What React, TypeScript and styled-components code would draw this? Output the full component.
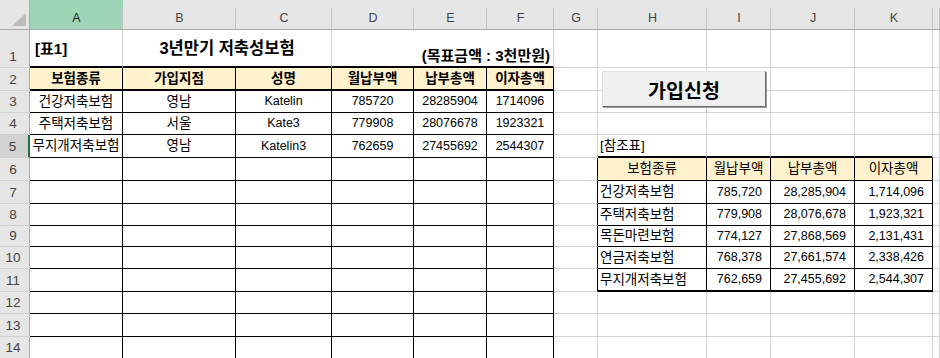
import React from 'react'
import styled, { createGlobalStyle, css } from 'styled-components'

type Line = 'grid' | 'thin' | 'thick'

type CellSpec = {
  text?: string
  span?: number
  align?: 'left' | 'center' | 'right'
  valign?: 'center' | 'end'
  bold?: boolean
  fill?: boolean
  size?: number
  padLeft?: number
  padRight?: number
  r: Line
  b: Line
}

const COLS = ['A', 'B', 'C', 'D', 'E', 'F', 'G', 'H', 'I', 'J', 'K', '']
const COL_WIDTHS = [93, 113, 96, 82, 73, 67, 44, 109, 64, 84, 78]
const ROW_HEIGHTS = [38, 23, 22, 22, 23, 23, 23, 22, 21, 22, 23, 22, 23, 22]
const ACTIVE_COL = 'A'
const ACTIVE_ROW = 5

const LEFT_HEAD = ['보험종류', '가입지점', '성명', '월납부액', '납부총액', '이자총액']
const LEFT_DATA = [
  ['건강저축보험', '영남', 'Katelin', '785720', '28285904', '1714096'],
  ['주택저축보험', '서울', 'Kate3', '779908', '28076678', '1923321'],
  ['무지개저축보험', '영남', 'Katelin3', '762659', '27455692', '2544307'],
]

const REF_HEAD = ['보험종류', '월납부액', '납부총액', '이자총액']
const REF_DATA = [
  ['건강저축보험', '785,720', '28,285,904', '1,714,096'],
  ['주택저축보험', '779,908', '28,076,678', '1,923,321'],
  ['목돈마련보험', '774,127', '27,868,569', '2,131,431'],
  ['연금저축보험', '768,378', '27,661,574', '2,338,426'],
  ['무지개저축보험', '762,659', '27,455,692', '2,544,307'],
]

// hangul runs a bit wider in the original font than latin does
const textSize = (text?: string) => (text && /[가-힣]/.test(text) ? 13.5 : 12.5)

// builds the cells of one sheet row (row numbers start at 1 like Excel)
const buildRow = (row: number): CellSpec[] => {
  const cells: CellSpec[] = []

  if (row === 1) {
    cells.push({ text: '[표1]', align: 'left', bold: true, size: 15, padLeft: 5, r: 'grid', b: 'thick' })
    cells.push({ text: '3년만기 저축성보험', span: 2, bold: true, size: 16.5, r: 'grid', b: 'thick' })
    cells.push({
      text: '(목표금액 : 3천만원)',
      span: 3,
      align: 'right',
      valign: 'end',
      bold: true,
      size: 15,
      r: 'grid',
      b: 'thick',
    })
  } else if (row === 2) {
    LEFT_HEAD.forEach((text) => cells.push({ text, bold: true, fill: true, r: 'thin', b: 'thick' }))
  } else {
    const data = LEFT_DATA[row - 3]
    for (let c = 0; c < 6; c++) {
      cells.push({ text: data ? data[c] : undefined, r: 'thin', b: 'thin' })
    }
  }

  // column G: its right edge is the left edge of the reference table
  cells.push({ r: row >= 6 && row <= 11 ? 'thin' : 'grid', b: 'grid' })

  // columns H..K
  for (let c = 0; c < 4; c++) {
    if (row === 5) {
      cells.push({ text: c === 0 ? '[참조표]' : undefined, align: 'left', padLeft: 2, r: 'grid', b: 'thick' })
    } else if (row === 6) {
      cells.push({ text: REF_HEAD[c], fill: true, r: 'thin', b: 'thin' })
    } else if (row >= 7 && row <= 11) {
      const data = REF_DATA[row - 7]
      cells.push({
        text: data[c],
        align: c === 0 ? 'left' : 'right',
        padLeft: 2,
        padRight: c === 0 ? 3 : 8,
        r: 'thin',
        b: row === 11 ? 'thick' : 'thin',
      })
    } else {
      cells.push({ r: 'grid', b: 'grid' })
    }
  }

  cells.push({ r: 'grid', b: 'grid' })
  return cells
}

const line = (l: Line) =>
  l === 'thick' ? '2px solid #000' : l === 'thin' ? '1px solid #000' : '1px solid #d4d4d4'

export default function App() {
  const rows = ROW_HEIGHTS.map((_, i) => i + 1)

  return (
    <>
      <GlobalStyle />
      <Sheet>
        <Corner>
          <CornerMark />
        </Corner>
        {COLS.map((col, i) => (
          <ColHead key={`h${i}`} $active={col === ACTIVE_COL}>
            {col}
          </ColHead>
        ))}

        {rows.map((row) => (
          <React.Fragment key={row}>
            <RowHead $active={row === ACTIVE_ROW}>{row}</RowHead>
            {buildRow(row).map((cell, i) => (
              <Cell
                key={i}
                $span={cell.span ?? 1}
                $align={cell.align ?? 'center'}
                $valign={cell.valign ?? 'center'}
                $bold={!!cell.bold}
                $fill={!!cell.fill}
                $size={cell.size ?? textSize(cell.text)}
                $padLeft={cell.padLeft ?? 3}
                $padRight={cell.padRight ?? 3}
                $r={cell.r}
                $b={cell.b}
              >
                {cell.text}
              </Cell>
            ))}
          </React.Fragment>
        ))}

        <FormButton type="button">가입신청</FormButton>
      </Sheet>
    </>
  )
}

const GlobalStyle = createGlobalStyle`
  body {
    margin: 0;
    background: #ffffff;
    font-family: "Liberation Sans", "Noto Sans CJK KR", sans-serif;
  }
`

const Sheet = styled.div`
  position: relative;
  width: 940px;
  height: 358px;
  overflow: hidden;
  display: grid;
  grid-template-columns: 30px ${COL_WIDTHS.map((w) => `${w}px`).join(' ')} 1fr;
  grid-template-rows: 30px ${ROW_HEIGHTS.map((h) => `${h}px`).join(' ')};
  background: #ffffff;
`

const Corner = styled.div`
  box-sizing: border-box;
  display: flex;
  align-items: flex-end;
  justify-content: flex-end;
  padding: 0 3px 3px 0;
  background: #e6e6e6;
  border-right: 1px solid #ababab;
  border-bottom: 1px solid #ababab;
`

const CornerMark = styled.div`
  width: 14px;
  height: 13px;
  background: #bcbcbc;
  clip-path: polygon(100% 0, 100% 100%, 0 100%);
`

const ColHead = styled.div<{ $active: boolean }>`
  position: relative;
  box-sizing: border-box;
  display: flex;
  align-items: center;
  justify-content: center;
  padding-top: 6px;
  font-size: 12.5px;
  color: ${(p) => (p.$active ? '#1f1f1f' : '#444444')};
  background: ${(p) => (p.$active ? '#9fd5b7' : '#e6e6e6')};
  border-bottom: 1px solid #ababab;

  &::after {
    content: '';
    position: absolute;
    right: 0;
    top: 8px;
    bottom: 0;
    width: 1px;
    background: #c4c4c4;
  }
`

const RowHead = styled.div<{ $active: boolean }>`
  box-sizing: border-box;
  display: flex;
  align-items: flex-end;
  justify-content: center;
  padding: 0 3px 4px 0;
  font-size: 13.5px;
  line-height: 1;
  color: #444444;
  background: ${(p) => (p.$active ? '#d2d2d2' : '#e6e6e6')};
  border-bottom: 1px solid #d0d0d0;
  ${(p) =>
    p.$active
      ? css`
          border-right: 2px solid #217346;
        `
      : css`
          border-right: 1px solid #ababab;
        `}
`

const Cell = styled.div<{
  $span: number
  $align: 'left' | 'center' | 'right'
  $valign: 'center' | 'end'
  $bold: boolean
  $fill: boolean
  $size: number
  $padLeft: number
  $padRight: number
  $r: Line
  $b: Line
}>`
  grid-column: span ${(p) => p.$span};
  box-sizing: border-box;
  display: flex;
  align-items: ${(p) => (p.$valign === 'end' ? 'flex-end' : 'center')};
  justify-content: ${(p) =>
    p.$align === 'left' ? 'flex-start' : p.$align === 'right' ? 'flex-end' : 'center'};
  padding: 0 ${(p) => p.$padRight}px ${(p) => (p.$valign === 'end' ? 3 : 0)}px ${(p) => p.$padLeft}px;
  white-space: nowrap;
  overflow: visible;
  font-size: ${(p) => p.$size}px;
  font-weight: ${(p) => (p.$bold ? 700 : 400)};
  line-height: 1;
  color: #000000;
  background: ${(p) => (p.$fill ? '#fff2cc' : 'transparent')};
  border-right: ${(p) => line(p.$r)};
  border-bottom: ${(p) => line(p.$b)};
`

const FormButton = styled.button`
  position: absolute;
  left: 602px;
  top: 71px;
  width: 164px;
  height: 36px;
  box-sizing: border-box;
  margin: 0;
  padding: 0;
  font-family: "Liberation Sans", "Noto Sans CJK KR", sans-serif;
  font-size: 19.5px;
  font-weight: 700;
  color: #000000;
  background: #f0f0f0;
  border: 1px solid;
  border-color: #e2e2e2 #6e6e6e #6e6e6e #e2e2e2;
  box-shadow: 1px 1px 0 #9a9a9a;
  cursor: pointer;
`
